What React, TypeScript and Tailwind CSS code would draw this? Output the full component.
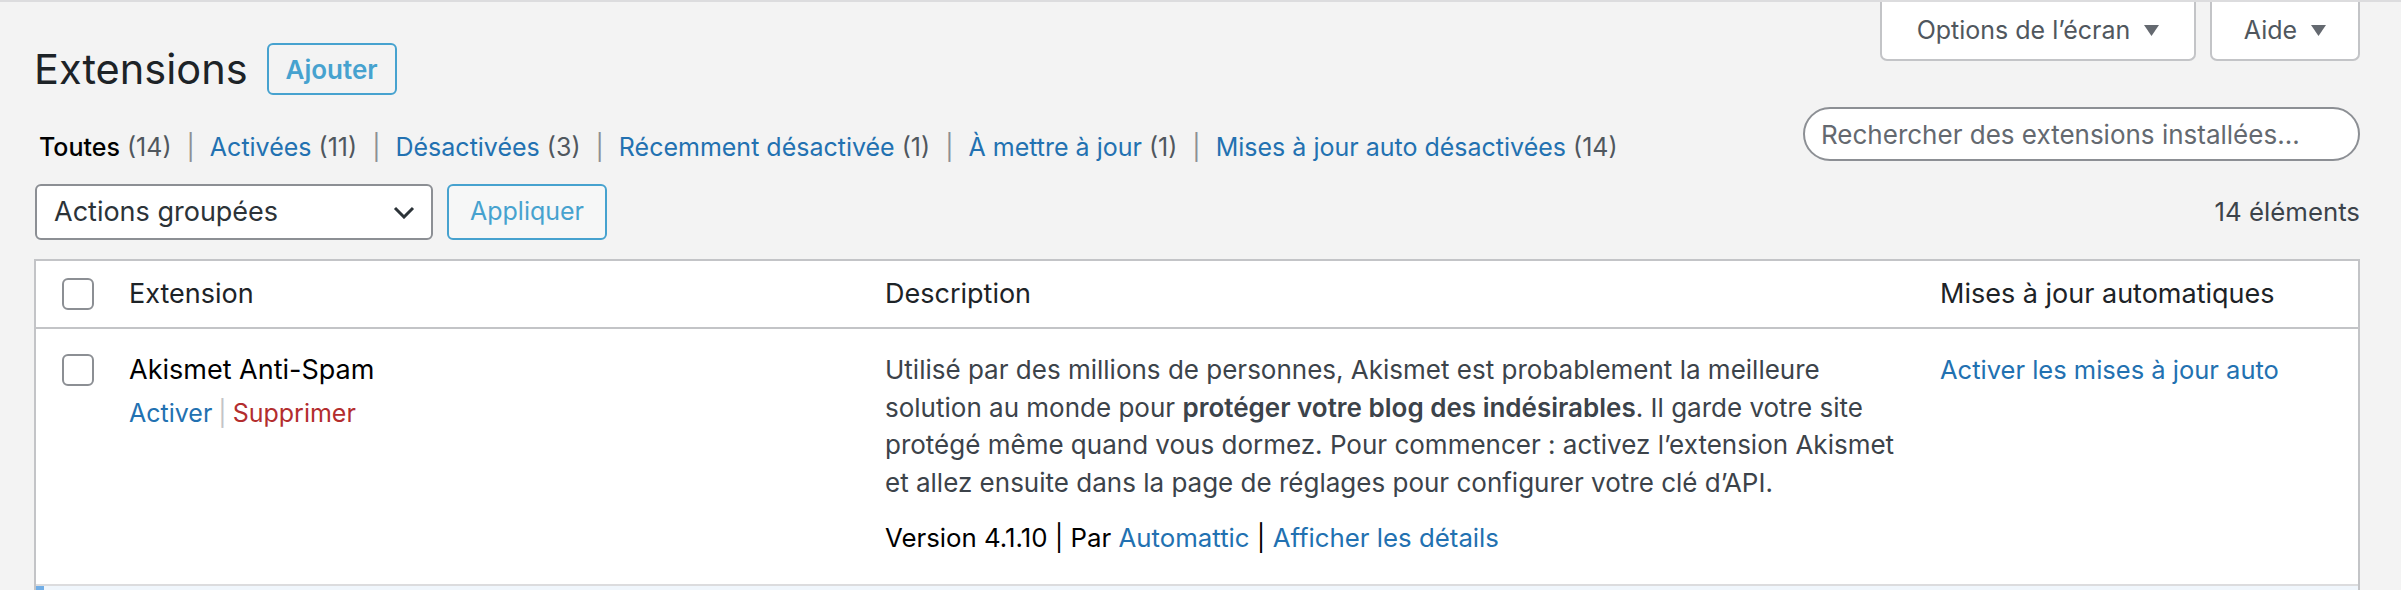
import React from 'react';

const FONT = "font-['Inter','Noto_Sans',sans-serif]";

function Triangle() {
  return (
    <svg width="15" height="11" viewBox="0 0 15 11" className="ml-[14px] fill-[#646970]">
      <path d="M0 0h15L7.5 11z" />
    </svg>
  );
}

function ScreenButton({ label, width }: { label: string; width: string }) {
  return (
    <button
      className={`${width} h-[59px] flex items-center justify-center bg-white border-2 border-t-0 border-[#c3c4c7] rounded-b-[7px] text-[25px] text-[#50575e]`}
    >
      {label}
      <Triangle />
    </button>
  );
}

function Checkbox() {
  return (
    <input
      type="checkbox"
      className="appearance-none block w-[32px] h-[32px] border-2 border-[#8c8f94] rounded-[6px] bg-white"
    />
  );
}

const filters = [
  { label: 'Toutes', count: 14, current: true },
  { label: 'Activées', count: 11 },
  { label: 'Désactivées', count: 3 },
  { label: 'Récemment désactivée', count: 1 },
  { label: 'À mettre à jour', count: 1 },
  { label: 'Mises à jour auto désactivées', count: 14 },
];

const COLS = 'grid grid-cols-[73px_756px_1055px_1fr]';

export default function App() {
  return (
    <div className={`min-h-screen w-full bg-[#f3f3f3] border-t-2 border-[#dcdcde] ${FONT} text-[25px] text-[#3c434a]`}>
      <div className="pl-[34px] pr-[41px]">
        {/* Title + screen meta */}
        <div className="flex items-start justify-between">
          <div className="flex items-center gap-[19px] pt-[41px]">
            <h1 className="text-[41.5px] leading-[52px] font-normal text-[#1d2327]">Extensions</h1>
            <button className="h-[52px] w-[130px] border-2 border-[#46a2cf] rounded-[6px] text-[26px] text-[#46a2cf] font-semibold">
              Ajouter
            </button>
          </div>
          <div className="flex gap-[14px]">
            <ScreenButton label="Options de l’écran" width="w-[316px]" />
            <ScreenButton label="Aide" width="w-[150px]" />
          </div>
        </div>

        {/* Filters + search */}
        <div className="flex items-start justify-between mt-[12px]">
          <ul className="flex mt-[21px] leading-[38px] text-[25px] whitespace-pre pl-[5px]">
            {filters.map((f, i) => (
              <li key={f.label} className="flex">
                <a className={f.current ? 'text-black font-medium' : 'text-[#2271b1]'}>{f.label}</a>
                <span className="text-[#50575e]"> ({f.count})</span>
                {i < filters.length - 1 && <span className="text-[#8c8f94] px-[15px]">|</span>}
              </li>
            ))}
          </ul>
          <input
            type="search"
            placeholder="Rechercher des extensions installées..."
            className="w-[557px] h-[54px] rounded-full border-2 border-[#8c8f94] bg-white pl-[16px] pr-[6px] text-[26px] placeholder:text-[#646970] outline-none"
          />
        </div>

        {/* Bulk actions */}
        <div className="flex items-center justify-between mt-[18px] h-[56px]">
          <div className="flex gap-[14px] pl-[1px]">
            <div className="w-[398px] h-[56px] flex items-center justify-between bg-white border-2 border-[#8c8f94] rounded-[6px] pl-[17px] pr-[16px] text-[27px] text-[#2c3338]">
              <span>Actions groupées</span>
              <svg width="22" height="13" viewBox="0 0 22 13" fill="none" stroke="#2c3338" strokeWidth="3">
                <path d="M2 2l9 9 9-9" />
              </svg>
            </div>
            <button className="w-[160px] h-[56px] border-2 border-[#46a2cf] rounded-[6px] text-[#46a2cf] bg-[#f6f7f7]">
              Appliquer
            </button>
          </div>
          <span className="text-[25.8px] text-[#3c434a]">14 éléments</span>
        </div>

        {/* Plugins table */}
        <div className="mt-[19px] bg-white border-2 border-[#c3c4c7]">
          <div className={`${COLS} h-[68px] items-center border-b-2 border-[#c3c4c7] text-[27px] text-[#1d2327]`}>
            <div className="pl-[26px]">
              <Checkbox />
            </div>
            <div className="pl-[20px]">Extension</div>
            <div className="pl-[20px]">Description</div>
            <div className="pl-[20px]">Mises à jour automatiques</div>
          </div>

          <div className={`${COLS} pt-[22px] pb-[27px] border-b-2 border-[#dcdcde] leading-[37.5px]`}>
            <div className="pl-[26px] pt-[3px]">
              <Checkbox />
            </div>
            <div className="pl-[20px]">
              <div className="text-[27px] text-black">Akismet Anti-Spam</div>
              <div className="mt-[6px]">
                <a className="text-[#2271b1]">Activer</a>
                <span className="text-[#c3c4c7] mx-[6px]">|</span>
                <a className="text-[#b32d2e]">Supprimer</a>
              </div>
            </div>
            <div className="pl-[20px] pr-[20px] text-[26px]">
              <p>
                Utilisé par des millions de personnes, Akismet est probablement la meilleure solution au monde pour{' '}
                <strong className="font-semibold">protéger votre blog des indésirables</strong>. Il garde votre site
                protégé même quand vous dormez. Pour commencer : activez l’extension Akismet et allez ensuite dans la
                page de réglages pour configurer votre clé d’API.
              </p>
              <div className="mt-[18px] text-[25.8px] text-black">
                Version 4.1.10 | Par <a className="text-[#2271b1]">Automattic</a> |{' '}
                <a className="text-[#2271b1]">Afficher les détails</a>
              </div>
            </div>
            <div className="pl-[20px] text-[25.5px]">
              <a className="text-[#2271b1]">Activer les mises à jour auto</a>
            </div>
          </div>

          <div className={`${COLS} pt-[22px] pb-[27px] bg-[#f0f6fc] shadow-[inset_8px_0_0_#72aee6] leading-[37.5px]`}>
            <div className="pl-[26px] pt-[3px]">
              <Checkbox />
            </div>
            <div className="pl-[20px]">
              <div className="text-[27px] text-black font-semibold">Classic Editor</div>
              <div className="mt-[6px]">
                <a className="text-[#2271b1]">Désactiver</a>
              </div>
            </div>
            <div className="pl-[20px] pr-[20px] text-[26px]">
              <p>Active l’éditeur classique de WordPress.</p>
            </div>
            <div className="pl-[20px] text-[25.5px]">
              <a className="text-[#2271b1]">Activer les mises à jour auto</a>
            </div>
          </div>
        </div>
      </div>
    </div>
  );
}
